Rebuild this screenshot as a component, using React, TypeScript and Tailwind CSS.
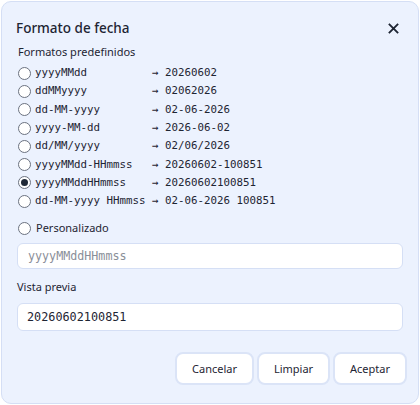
import { useState } from 'react'

const formats: [string, string][] = [
  ['yyyyMMdd', '20260602'],
  ['ddMMyyyy', '02062026'],
  ['dd-MM-yyyy', '02-06-2026'],
  ['yyyy-MM-dd', '2026-06-02'],
  ['dd/MM/yyyy', '02/06/2026'],
  ['yyyyMMdd-HHmmss', '20260602-100851'],
  ['yyyyMMddHHmmss', '20260602100851'],
  ['dd-MM-yyyy HHmmss', '02-06-2026 100851'],
]

const sans = "font-['Noto_Sans',sans-serif]"
const mono = "font-['DejaVu_Sans_Mono',monospace]"

function Radio({ checked }: { checked: boolean }) {
  return (
    <span className="w-[13px] h-[13px] rounded-full border border-[#6b7280] bg-white flex items-center justify-center shrink-0">
      {checked && <span className="w-[7px] h-[7px] rounded-full bg-[#1f2937]" />}
    </span>
  )
}

export default function App() {
  const [selected, setSelected] = useState(6)

  return (
    <div className={`w-[420px] h-[405px] bg-white p-[1px] ${sans}`}>
      <div className="h-full rounded-[10px] border border-[#d5dff5] bg-[#ecf2fe] px-[15px] text-[#1e2533]">
        {/* 头部 */}
        <div className="flex items-center justify-between h-[28px] mt-[12px]">
          <h2 className="text-[13.5px] font-medium -ml-[1px]">Formato de fecha</h2>
          <button type="button" className="mr-[3px]" aria-label="Cerrar">
            <svg className="w-[13px] h-[13px]" viewBox="0 0 14 14" fill="none" stroke="#1e2533" strokeWidth={2}>
              <path d="M2 2l10 10M12 2L2 12" />
            </svg>
          </button>
        </div>

        <div className="text-[11px] mt-[1px] ml-[1px] leading-[18px]">Formatos predefinidos</div>

        {/* 格式列表 */}
        <div className="flex flex-col mt-[3px] ml-[1px]">
          {formats.map(([fmt, out], i) => (
            <label
              key={fmt}
              onClick={() => setSelected(i)}
              className="flex items-center gap-[4px] h-[18.3px] cursor-pointer"
            >
              <Radio checked={selected === i} />
              <span className={`${mono} text-[10.8px] whitespace-pre text-[#1e2533]`}>
                {fmt.padEnd(17, ' ') + ' → ' + out}
              </span>
            </label>
          ))}
        </div>

        <label onClick={() => setSelected(8)} className="flex items-center gap-[5px] mt-[8px] ml-[1px] h-[20px] cursor-pointer">
          <Radio checked={selected === 8} />
          <span className="text-[11px]">Personalizado</span>
        </label>

        <input
          className={`${mono} mt-[5px] w-full h-[26px] rounded-[6px] border border-[#d5dff5] bg-white px-[10px] text-[11.7px] placeholder:text-[#8a8f99] outline-none`}
          placeholder="yyyyMMddHHmmss"
        />

        <div className="text-[11px] mt-[9px] leading-[18px]">Vista previa</div>

        <div className={`${mono} mt-[7px] h-[28px] rounded-[6px] border border-[#d5dff5] bg-white px-[9px] flex items-center text-[11.8px]`}>
          20260602100851
        </div>

        {/* 按钮 */}
        <div className="flex justify-end gap-[3px] mt-[21px] -mr-[4px] text-[11px]">
          <button type="button" className="w-[79px] h-[33px] rounded-[8px] border-2 border-[#dbe4f7] bg-white">
            Cancelar
          </button>
          <button type="button" className="w-[73px] h-[33px] rounded-[8px] border-2 border-[#dbe4f7] bg-white">
            Limpiar
          </button>
          <button type="button" className="w-[74px] h-[33px] rounded-[8px] border-2 border-[#dbe4f7] bg-white">
            Aceptar
          </button>
        </div>
      </div>
    </div>
  )
}
